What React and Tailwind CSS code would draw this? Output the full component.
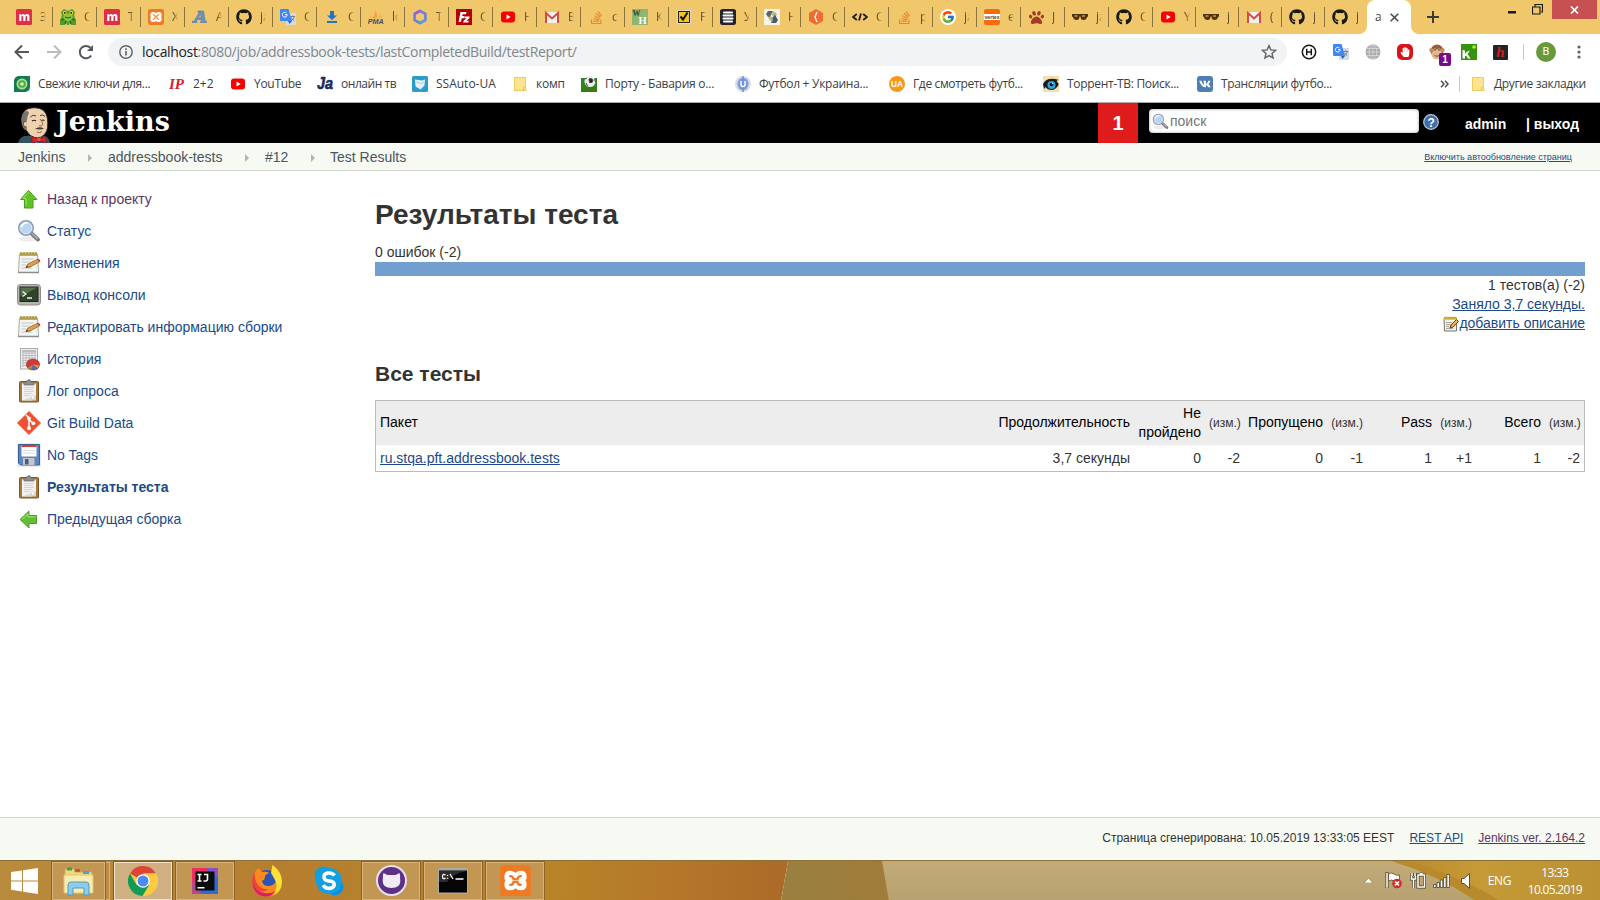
import React from "react";
import { FaGithub, FaStackOverflow, FaPaw, FaVk, FaHandPaper } from "react-icons/fa";
import { FcGoogle } from "react-icons/fc";

const S = ({ s = 16, v = "0 0 16 16", children, className = "" }) => (
  <svg width={s} height={s} viewBox={v} className={"block shrink-0 " + className}>{children}</svg>
);

/* ---------- favicons ---------- */
const Miro = () => (
  <S><rect width="16" height="16" rx="1.500" fill="#dd2f45" /><path d="M3.200 12V5.200h2.200v1c1.200-1.500 3-1.500 3.600 0 1.200-1.600 4.400-1.600 4.400 1.200V12h-2.200V8c0-1.400-1.700-1.200-1.700.2V12H7.200V8c0-1.400-1.800-1.200-1.800.2V12z" fill="#fff" /></S>
);
const Frog = () => (
  <S><path d="M1 3l3-3 4 2 4-2 3 3-1 4 2 4v5h-5l-1-3-1 3H7l-1-3-1 3H0v-5l2-4z" fill="#4f9e2d" /><path d="M4 5h8l1 4-5 4-5-4z" fill="#8bc53f" /><circle cx="4.800" cy="3.800" r="2" fill="#f5d21b" /><circle cx="11.200" cy="3.800" r="2" fill="#f5d21b" /><circle cx="4.800" cy="3.800" r=".9" /><circle cx="11.200" cy="3.800" r=".9" /><path d="M5 8q3 2 6 0M1 11l3-1M15 11l-3-1M5 15l1-3M11 15l-1-3" stroke="#1d5b17" fill="none" /></S>
);
const Xampp = ({ s = 16 }) => (
  <S s={s} v="0 0 32 32">
    <rect width="32" height="32" rx="4" fill="#ef7a26" />
    <path d="M10 7.500q-4 .5-4 4.500 0 3 2 4-2 1-2 4 0 4.500 4.500 4.500Q14 24.500 16 21.500q2 3 5.500 3 4.500 0 4.500-4.500 0-3-2-4 2-1 2-4 0-4.500-4.500-4.500Q18 7.500 16 10.500 14 7.500 10 7.500z" fill="#fff" stroke="#fff" strokeWidth="3" strokeLinejoin="round" />
    <path d="M10.500 11.500q3 0 3.500 3h4q.5-3 3.500-3M10.500 20.500q3 0 3.500-3h4q.5 3 3.500 3" stroke="#ef7a26" strokeWidth="2.400" strokeLinecap="round" fill="none" />
  </S>
);
const LetterA = () => (
  <S><path d="M0 13.500h5v-1.200H4L5 10.500h4.500l.3 1.800H8.500v1.200h6v-1.200h-1.200L11.500 2H6v1.300h1.500L2 12.300H0zM6.200 8.700l2.400-4 .6 4z" fill="#6b93bd" stroke="#4e7ba9" strokeWidth=".6" /></S>
);
const Github = () => <FaGithub size={16} className="shrink-0 text-[#1b1a12]" />;
const GTranslate = () => (
  <S><rect x="6" y="4" width="10" height="12" rx="1" fill="#d5dbe3" /><path d="M1 0h7.500l3.500 12H1a1 1 0 0 1-1-1V1a1 1 0 0 1 1-1z" fill="#4285f4" /><path d="M8 12h4l-2.500 3z" fill="#2f5fc0" /><path d="M7.200 5.700H5M7.200 5.700A2.400 2.400 0 1 1 6.500 4" stroke="#fff" strokeWidth="1" fill="none" /><path d="M10.500 7.500h4.500M12.700 6.500v1M14.300 7.500c-.5 2-1.600 3.300-3 4M11.200 8.500c.6 1.400 1.800 2.500 3 3" stroke="#5a6b80" strokeWidth=".8" fill="none" /></S>
);
const Download = () => (
  <S><path d="M6 2h4v4.500h3L8 11 3 6.500h3z" fill="#2273cc" /><rect x="3" y="12" width="10" height="2" fill="#2273cc" /></S>
);
const Pma = () => (
  <S><path d="M4 9Q7 7 7.500 1 9.500 4 9 9z" fill="#f8a13a" /><path d="M10 9q1.500-2 1-5 3 2 3.500 5z" fill="#f5b35e" /><path d="M1 9h4L3.500 6z" fill="#f4b568" /><text x="-.2" y="15.200" fontSize="6.500" fontWeight="700" fontStyle="italic" fontFamily="Liberation Sans" textLength="16" lengthAdjust="spacingAndGlyphs" fill="#4b4a6d">PMA</text></S>
);
const Hexa = () => (
  <S><path d="M8 1.800l5.400 3.100v6.200L8 14.200 2.600 11.100V4.900z" fill="none" stroke="#6f7ce0" strokeWidth="2.600" strokeLinejoin="round" /><path d="M2.600 4.900L8 1.800" stroke="#a05fc9" strokeWidth="2.600" /><path d="M13.400 11.100L8 14.200" stroke="#54a0e8" strokeWidth="2.600" /></S>
);
const Fz = () => (
  <S><rect width="16" height="16" fill="#b30000" /><path d="M4.500 3h6l-.5 2.200H6.600L6.200 7h2.300L8 9.200H5.700L5 13H2.600z" fill="#fff" /><path d="M8.700 7.500h5l-.4 1.800-3 2.500h2.500L12.400 13.500H7.200l.4-1.700 3-2.500H8.300z" fill="#fff" /></S>
);
const Youtube = () => (
  <S><rect x="1" y="2.500" width="14" height="11" rx="3" fill="#f60000" /><path d="M6.500 5.500v5L10.700 8z" fill="#fff" /></S>
);
const Gmail = () => (
  <S><path d="M1 3h14v11H1z" fill="#f3f1ee" /><path d="M2 14V4l6 5.500L14 4v10" fill="none" stroke="#d54b3d" strokeWidth="2" /></S>
);
const Stack = () => <FaStackOverflow size={15} className="shrink-0 text-[#e9862c]" />;
const WH = () => (
  <S><rect width="16" height="16" fill="#8fb573" /><text x=".5" y="7" fontSize="8" fontWeight="700" fontFamily="Liberation Serif" fill="#2f4a2b">W</text><text x="6.500" y="15" fontSize="10.500" fontWeight="700" fontFamily="Liberation Serif" fill="#fff">H</text></S>
);
const CheckY = () => (
  <S><rect x="1" y="1" width="14" height="14" fill="#dcdcd2" /><rect x="2.500" y="2.500" width="11" height="11" fill="#f7c61b" stroke="#222" /><path d="M4.500 7.500l2.500 3 4.500-7" stroke="#111" strokeWidth="2" fill="none" /></S>
);
const Lines = () => (
  <S><rect width="16" height="16" rx="2.500" fill="#23232a" /><path d="M4 3.500h8M3.500 6.500h9M3.500 9.500h9M4 12.500h8" stroke="#fff" strokeWidth="2" strokeLinecap="round" /></S>
);
const Hib = () => (
  <S><rect width="16" height="16" fill="#f6f4e8" /><path d="M4 2h5l-3 6H4L2 5z" fill="#59666c" /><path d="M9 2l4 3-2 4-3-3z" fill="#bcae79" /><path d="M7 14h5l2-3-3-5-3 3z" fill="#445a70" /><path d="M4 8l4 6 1-4-2-3z" fill="#bcae79" /></S>
);
const Brace = () => (
  <S><path d="M8 0l7 4v8l-7 4-7-4V4z" fill="#ee6c32" /><path d="M9.500 3.500C7 3.500 8.800 7.500 6.500 8 8.800 8.500 7 12.500 9.500 12.500" stroke="#fff" strokeWidth="1.300" fill="none" /></S>
);
const Code = () => (
  <S><path d="M4.800 5L1 8l3.800 3M11.200 5L15 8l-3.800 3M9 4.500l-2 7" stroke="#1b1a12" strokeWidth="1.800" fill="none" /></S>
);
const Google = () => <div className="flex size-4 shrink-0 items-center justify-center rounded-full bg-white"><FcGoogle size={14} /></div>;
const Vertex = () => (
  <S><rect width="16" height="16" rx="2" fill="#f96a0c" /><rect y="5" width="16" height="6" fill="#fff" /><text x=".5" y="9.700" fontSize="5" fontWeight="700" fontFamily="Liberation Sans" textLength="15" lengthAdjust="spacingAndGlyphs" fill="#444">vertex</text></S>
);
const Paw = () => <FaPaw size={15} className="shrink-0 text-[#a33a2c]" />;
const Glasses = () => (
  <S><path d="M0 5h16v2.500l-1 .5q-.5 3-3.500 3T8.500 7.500h-1Q7.500 11 4.500 11T1 8L0 7.500z" fill="#4a3310" /><path d="M2.500 7h3M10 7h3" stroke="#e08e1b" strokeWidth="1.500" /></S>
);

const TABS = [
  [Miro, "З"], [Frog, "С"], [Miro, "Т"], [Xampp, "Х"], [LetterA, "А"], [Github, "ja"], [GTranslate, "С"], [Download, "С"],
  [Pma, "lo"], [Hexa, "Т"], [Fz, "С"], [Youtube, "Н"], [Gmail, "В"], [Stack, "с"], [WH, "К"], [CheckY, "F"],
  [Lines, "У"], [Hib, "Н"], [Brace, "С"], [Code, "С"], [Stack, "р"], [Google, "ja"], [Vertex, "е"], [Paw, "J"],
  [Glasses, "ja"], [Github, "С"], [Youtube, "Y"], [Glasses, "j"], [Gmail, "("], [Github, "j"], [Github, "j"],
];

const Tab = ({ Icon, t, w, last }) => (
  <div className={"flex h-full shrink-0 items-center pl-[7px] " + w}>
    <div className="flex w-4 shrink-0 justify-center"><Icon /></div>
    <div className="ml-2 w-[6px] shrink-0 overflow-hidden text-[12px] leading-4 whitespace-nowrap text-[#5a4c2a] [mask-image:linear-gradient(to_right,#000_30%,transparent)]">{t}</div>
    <div className={"ml-auto h-5 w-px " + (last ? "" : "bg-[#8b7440]")} />
  </div>
);

/* ---------- bookmarks ---------- */
const Leaf = () => (
  <S><path d="M5 0h11v11a5 5 0 0 1-5 5H0V5a5 5 0 0 1 5-5z" fill="#147a4f" /><circle cx="8" cy="8" r="5.500" fill="#a8dc9b" /><circle cx="8" cy="8" r="3.800" fill="#4eae3f" /><circle cx="8" cy="8" r="1.800" fill="#d6f0c8" /></S>
);
const IP = () => (
  <S><text x="0" y="13" fontSize="15" fontWeight="700" fontStyle="italic" fontFamily="Liberation Serif" textLength="15" lengthAdjust="spacingAndGlyphs" fill="#d8202a">IP</text></S>
);
const Ja = () => (
  <S><text x="0" y="13" fontSize="16" fontWeight="700" fontStyle="italic" fontFamily="Liberation Sans" textLength="16" lengthAdjust="spacingAndGlyphs" stroke="#1c2a5e" strokeWidth=".6" fill="#1c2a5e">Ja</text></S>
);
const SSA = () => (
  <S><rect width="16" height="16" rx="1.500" fill="#2c9ccb" /><path d="M3 3.500l7 1 3-1-.5 6-4 4-5-3z" fill="#e2f2f8" /><path d="M4 6l4.500 1.500L12 6" stroke="#a8cfdf" fill="none" /></S>
);
const Folder = () => (
  <S><path d="M2.500 1.500h11v10l.5 1v2H2.500z" fill="#fde48d" stroke="#eccb62" /><path d="M11.500 14.500v-3l2-1" fill="none" stroke="#e5bf4c" /></S>
);
const Ball = () => (
  <S><rect y="2" width="16" height="14" fill="#2f8420" /><rect y="11" width="16" height="5" fill="#3c7a13" /><circle cx="9" cy="5.500" r="5.500" fill="#e9ecec" /><path d="M8 3l2-.5 2 1.500-1 2.500H8.500zM4 3l2-1M13.500 3l1 3M5 7l1.500 3" fill="#222" stroke="#444" /></S>
);
const UBall = () => (
  <S><circle cx="8" cy="8" r="8" fill="#d9dce3" /><ellipse cx="8" cy="8" rx="5.500" ry="6.200" fill="#7d9be0" /><path d="M8 0v16" stroke="#6f8fd8" strokeWidth="1.500" /><path d="M6 5v3.500a2 2 0 0 0 4 0V5" stroke="#fff" strokeWidth="1.400" fill="none" /></S>
);
const UA = () => (
  <S><circle cx="8" cy="8" r="8" fill="#f7981d" /><text x="2" y="11.300" fontSize="9" fontWeight="700" fontFamily="Liberation Sans" textLength="12" lengthAdjust="spacingAndGlyphs" fill="#fff">UA</text></S>
);
const Eye = () => (
  <S><rect width="16" height="16" fill="#f6dfa8" /><path d="M0 8q4-8 16-4-3 0-2 2 2 1 1.500 3-3 5-7 5-4 0-6-3L1 13z" fill="#1b1b1f" /><circle cx="8.500" cy="9" r="4" fill="#2aa5da" /><circle cx="8.500" cy="8.500" r="1.700" /><circle cx="9.500" cy="7.500" r=".7" fill="#fff" /></S>
);
const Vk = () => <div className="flex size-4 shrink-0 items-center justify-center rounded-[3px] bg-[#4d7fb6] text-white"><FaVk size={12} /></div>;

const BOOKMARKS = [
  [Leaf, "Свежие ключи для...", "w-[155px]", "tracking-[-0.32px]"],
  [IP, "2+2", "w-[61px]", ""],
  [Youtube, "YouTube", "w-[87px]", "tracking-[-0.3px]"],
  [Ja, "онлайн тв", "w-[95px]", "tracking-[-0.45px]"],
  [SSA, "SSAuto-UA", "w-[100px]", ""],
  [Folder, "комп", "w-[69px]", "tracking-[-0.2px]"],
  [Ball, "Порту - Бавария о...", "w-[154px]", "tracking-[-0.25px]"],
  [UBall, "Футбол + Украина...", "w-[154px]", "tracking-[-0.28px]"],
  [UA, "Где смотреть футб...", "w-[154px]", "tracking-[-0.37px]"],
  [Eye, "Торрент-ТВ: Поиск...", "w-[154px]", "tracking-[-0.3px]"],
  [Vk, "Трансляции футбо...", "w-[154px]", "tracking-[-0.35px]"],
];

/* ---------- jenkins icons ---------- */
const Up = () => (
  <S s={24} v="0 0 24 24"><path d="M11.500 3.500L20 12.500h-4V21H7.500v-8.500h-4z" fill="#5fc322" stroke="#46a01a" /><path d="M11.500 5l-5.500 6.500h3v7" stroke="#9be56a" fill="none" /></S>
);
const Left = () => (
  <S s={24} v="0 0 24 24"><path d="M3 12.500L12 4v4.500h7.500v8H12V21z" fill="#63bd35" stroke="#4c9e26" /><path d="M5 12.300l6-5.500v3h7.500" stroke="#a6e07e" fill="none" /></S>
);
const Lens = ({ s = 24 }) => (
  <S s={s} v="0 0 24 24"><ellipse cx="11" cy="20" rx="9" ry="2.500" fill="#ececec" /><path d="M14.500 14.500l6.500 6" stroke="#777" strokeWidth="4" strokeLinecap="round" /><path d="M15 14.500l6 5.500" stroke="#b5b5b5" strokeWidth="1.500" /><circle cx="9" cy="9" r="7" fill="#b9d5f3" stroke="#8d9bb0" strokeWidth="2" /><circle cx="9" cy="9" r="6" fill="none" stroke="#e4eef9" /><path d="M4.500 8q1-4 6-4" stroke="#fff" strokeWidth="1.500" fill="none" /></S>
);
const Notepad = () => (
  <S s={24} v="0 0 24 24"><path d="M2.500 3h18l1 18.500H1.500z" fill="#f4f4f2" stroke="#a9a9a6" /><path d="M1 21.500h21" stroke="#8f8f8c" strokeWidth="1.500" /><rect x="3" y="1.500" width="17" height="3.500" fill="#c3ad53" /><path d="M4 1v3M7 1v3M10 1v3M13 1v3M16 1v3M19 1v3" stroke="#8a7a35" strokeWidth=".8" /><path d="M4.500 8h12M4.500 11h9M4.500 14h6M4.500 17h10" stroke="#c4c4c4" /><path d="M9 16.500l2-3.500 10-5 2 2.500-10 5.500z" fill="#e0a04a" stroke="#8d5f26" strokeWidth=".8" /><path d="M20 8.500l1.500-.8L23.500 9.500 22 11z" fill="#c9403a" /><path d="M8.500 17l1.500-2 1.500 1z" fill="#333" /></S>
);
const SmallNote = () => (
  <S s={16}><path d="M1 2.500h12.500v12.500H1.500z" fill="#f1efe6" stroke="#77756a" /><rect x="1" y="1" width="13" height="3" fill="#e5c83e" /><path d="M2 .7v2M4 .7v2M6 .7v2M8 .7v2M10 .7v2M12 .7v2" stroke="#8a7524" strokeWidth=".8" /><path d="M3 6.500h6M3 8.500h5M3 10.500h3M3 12.500h7" stroke="#a5a399" strokeWidth=".9" /><path d="M7 12l1-3 5.500-5.500L15.500 5.500 10 11z" fill="#f0b541" stroke="#3f3420" strokeWidth=".9" /></S>
);
const Term = () => (
  <S s={24} v="0 0 24 24"><rect x=".5" y="1.500" width="23" height="20.500" rx="3" fill="#b5b6b2" stroke="#8d8e8a" /><rect x="3" y="4" width="18" height="14.500" fill="#2f4428" stroke="#1d2719" /><path d="M3.500 4.500h17l-17 9z" fill="#57704c" /><path d="M5.500 8.500l3.500 2.500-3.500 2.500M10 15h5" stroke="#eef3ea" strokeWidth="1.300" fill="none" /></S>
);
const Graph = () => (
  <S s={24} v="0 0 24 24"><rect x="3.500" y="1.500" width="17" height="20.500" fill="#eee" stroke="#aaa" /><path d="M5 3.500h14M5 6h14M5 8.500h14M5 11h14M5 13.500h8M5 16h4M5 18.500h4M6 3v17M9 3v17M12 3v10M15 3v8M18 3v8" stroke="#b4b4b4" strokeWidth=".8" /><rect x="5" y="3" width="14" height="2" fill="#bbb" /><ellipse cx="16" cy="17.500" rx="6.500" ry="5.500" fill="#d5383a" stroke="#9f2326" strokeWidth=".7" /><path d="M16 17.500l4.500 3.500q-3 2.500-6.500 1.500z" fill="#4c71b5" /><path d="M16 17.500l-2 5.200-3-2z" fill="#88a33a" /><path d="M16 17.500l6 1q-.5 1.500-1.500 2.500z" fill="#e0a232" /></S>
);
const Clip = () => (
  <S s={24} v="0 0 24 24"><rect x="2.500" y="2.500" width="19" height="20.500" rx="1" fill="#a8783a" stroke="#7e5725" /><path d="M5 4.500h14V17l-4.500 4.500H5z" fill="#f1f1ef" /><path d="M5 21.500h14V17" fill="#d6d6d2" /><path d="M14.500 21.500V17H19z" fill="#fff" stroke="#bbb" strokeWidth=".5" /><path d="M7 8.500h10M7 10.500h9M7 12.500h10M7 14.500h8M7 16.500h6" stroke="#cfcfcf" strokeWidth=".9" /><path d="M7 3h3q0-2.500 2-2.500T14 3h3v3H7z" fill="#8b8f8b" stroke="#666a66" strokeWidth=".7" /></S>
);
const Git = () => (
  <S s={24} v="0 0 24 24"><path d="M12 .5L23.500 12 12 23.500.5 12z" fill="#f05133" stroke="#f05133" strokeLinejoin="round" /><path d="M8.800 3.700L12 7v10M12 8.500l4.200 4" stroke="#fff" strokeWidth="1.500" fill="none" /><circle cx="12" cy="7.500" r="1.900" fill="#fff" /><circle cx="12" cy="17.200" r="1.900" fill="#fff" /><circle cx="16.300" cy="12.300" r="1.900" fill="#fff" /></S>
);
const Floppy = () => (
  <S s={24} v="0 0 24 24"><rect width="24" height="24" fill="#e9ebf0" /><path d="M1.500 1.500h21v20.500h-19l-2-2z" fill="#5b86be" stroke="#3c5f92" /><rect x="4.500" y="2" width="15" height="11.500" fill="#fff" /><rect x="4.500" y="2" width="15" height="2" fill="#dc3a2e" /><path d="M6 7.500h12M6 10h12" stroke="#d8d8d8" /><rect x="6" y="15" width="11.500" height="7" fill="#c3c7cb" /><rect x="8" y="16" width="3.500" height="5.500" fill="#4a5d78" /></S>
);
const MENU = [
  [Up, "Назад к проекту", "text-[#5c3566]"], [Lens, "Статус", "text-[#204a87]"], [Notepad, "Изменения", "text-[#204a87]"], [Term, "Вывод консоли", "text-[#204a87]"],
  [Notepad, "Редактировать информацию сборки", "text-[#204a87]"], [Graph, "История", "text-[#204a87]"], [Clip, "Лог опроса", "text-[#204a87]"], [Git, "Git Build Data", "text-[#204a87]"],
  [Floppy, "No Tags", "text-[#204a87]"], [Clip, "Результаты теста", "font-bold text-[#204a87]"], [Left, "Предыдущая сборка", "text-[#204a87]"],
];

const Butler = () => (
  <svg width="32" height="36" viewBox="0 0 32 36" className="block shrink-0">
    <path d="M0 36q1-5 6-7l18-1q7 1 8 8z" fill="#35505f" />
    <path d="M11 25l7 11 7-8z" fill="#f4f4f2" />
    <path d="M4 13Q3 1 16 .7 28 .5 29.500 12q1 10-2 14-4 6-11 4.500-5-1-8-7-5-1-4.500-10.500z" fill="#efd3b0" stroke="#2a211b" strokeWidth=".9" />
    <path d="M3.500 15Q2 9 7 4.500 10 3 11 6q-2 3-2 7l-1 3 1 7q-5-1-5.500-8z" fill="#77736e" />
    <path d="M8 15q-3-1-2.500 2.500.5 3 3 2.500" fill="#efd3b0" stroke="#54402f" strokeWidth=".8" />
    <path d="M12.500 10q2.500-3 5.500-1M22 8.500q3-1.500 5 1" stroke="#4d392a" strokeWidth="1" fill="none" />
    <path d="M14 14q2-1.500 4 0M23.500 13.500q1.500-1 3 0" stroke="#33241a" strokeWidth="1.200" fill="none" />
    <path d="M22 12q4 5 2 6.500-2 1-3 0" stroke="#7f5e47" strokeWidth=".9" fill="none" />
    <path d="M17 22q4-3 9-.5-3 1.500-9 .5z" fill="#4c3a2c" />
    <path d="M19 25q3 1.500 5-.5" stroke="#7f5e47" strokeWidth=".9" fill="none" />
    <path d="M14 29.500l7 2.500 7-2.500v6.500l-7-2-7 2z" fill="#d8242c" stroke="#7d1218" strokeWidth=".7" />
    <circle cx="21" cy="32.500" r="1.800" fill="#ef4a4f" />
  </svg>
);

const HEAD = "px-1 text-right";
const UPHEAD = "px-1 pb-[2px] text-right";
const DELTA = "px-1 text-right text-[12px] text-[#333]";
const Crumb = () => <svg width="4" height="8" viewBox="0 0 4 8" className="block"><path d="M0 0l4 4-4 4z" fill="#b4b4b4" /></svg>;

/* ---------- taskbar ---------- */
const TB = ({ children, w, active, plain }) => (
  <div className={"flex h-[38px] shrink-0 items-center justify-center " + w + " " + (plain ? "" : active ? "border border-[#f0e2c8] bg-[#cfb083] outline outline-1 outline-[#7d5b25]" : "border border-[#d8b47c] bg-[#c19753] outline outline-1 outline-[#8a6428]")}>{children}</div>
);

export default function App() {
  return (
    <div className="flex h-[900px] w-[1600px] flex-col overflow-hidden bg-white font-['Liberation_Sans',Arial,sans-serif] text-[14px] text-[#333]">
      {/* tab strip */}
      <div className="flex h-[34px] shrink-0 bg-[#f0c76b] pl-[9px] font-['Open_Sans',sans-serif]">
        {TABS.map(([I, t], i) => <Tab key={i} Icon={I} t={t} w={i === 30 ? "w-[42px]" : i > 25 ? "w-[43px]" : "w-11"} last={i === 30} />)}
        <div className="relative flex h-[34px] w-[44px] shrink-0 items-center rounded-t-[8px] bg-white pl-2">
          <svg className="absolute bottom-0 -left-2" width="8" height="8"><path d="M8 0v8H0a8 8 0 0 0 8-8z" fill="#fff" /></svg>
          <svg className="absolute -right-2 bottom-0" width="8" height="8"><path d="M0 0v8h8a8 8 0 0 1-8-8z" fill="#fff" /></svg>
          <div className="w-2 overflow-hidden text-[12px] [mask-image:linear-gradient(to_right,#000_60%,transparent)]">ad</div>
          <svg className="ml-[7px]" width="9" height="9" viewBox="0 0 9 9"><path d="M.7.7l7.600 7.600M8.300.7L.7 8.300" stroke="#4a4d51" strokeWidth="1.600" /></svg>
        </div>
        <svg className="mt-[11px] ml-[16px] block" width="12" height="12" viewBox="0 0 12 12"><path d="M6 0v12M0 6h12" stroke="#3c3a35" strokeWidth="2" /></svg>
        <svg className="mt-[10px] ml-[69px] block" width="9" height="4"><rect y="1" width="8" height="2.500" fill="#1c1a14" /></svg>
        <svg className="mt-[4px] ml-[15px] block" width="11" height="11"><path d="M.5 3h7.500v7H.5zM3 2.500V.5h7.500V8H9" fill="none" stroke="#1c1a14" strokeWidth="1.200" /></svg>
        <div className="ml-[9px] flex h-[19px] w-[45px] items-center justify-center bg-[#c75050]">
          <svg width="9" height="8" viewBox="0 0 9 8"><path d="M1 .5l7 7M8 .5l-7 7" stroke="#fff" strokeWidth="1.700" /></svg>
        </div>
      </div>

      {/* toolbar */}
      <div className="flex h-9 shrink-0 items-center pl-[14px] text-[#5f6368]">
        <svg width="16" height="16" viewBox="0 0 16 16"><path d="M15 8H2M8 1.500L1.500 8 8 14.500" stroke="#54585c" strokeWidth="2" fill="none" /></svg>
        <svg className="ml-4" width="16" height="16" viewBox="0 0 16 16"><path d="M1 8h13M8 1.500L14.500 8 8 14.500" stroke="#b9bcbf" strokeWidth="2" fill="none" /></svg>
        <svg className="ml-4" width="16" height="16" viewBox="0 0 16 16"><path d="M13.200 11.500A6.200 6.200 0 1 1 12.500 3.800" stroke="#54585c" strokeWidth="2" fill="none" /><path d="M15 1v6H9z" fill="#54585c" /></svg>
        <div className="ml-[14px] flex h-7 w-[1179px] items-center rounded-full bg-[#f1f3f4] pr-[10px] pl-[11px]">
          <svg width="14" height="14" viewBox="0 0 14 14"><circle cx="7" cy="7" r="6.200" fill="none" stroke="#5f6368" strokeWidth="1.400" /><path d="M7 6v4.500M7 3.300v1.600" stroke="#5f6368" strokeWidth="1.600" /></svg>
          <div className="ml-[9px] font-['Open_Sans',sans-serif] text-[14px] leading-5 tracking-[-0.34px] text-[#80868b]"><span className="text-[#202124]">localhost</span>:8080/job/addressbook-tests/lastCompletedBuild/testReport/</div>
          <svg className="ml-auto" width="16" height="16" viewBox="0 0 16 16"><path d="M8 1.600l1.900 4.300 4.700.4-3.600 3.100 1.100 4.600L8 11.600 3.900 14 5 9.400 1.400 6.300l4.700-.4z" fill="none" stroke="#5f6368" strokeWidth="1.400" /></svg>
        </div>
        <S s={16} className="ml-[14px]"><circle cx="8" cy="8" r="6.700" fill="none" stroke="#15171a" strokeWidth="1.500" /><path d="M5.700 4.800v6.400M10.300 4.800v6.400M5.700 8h4.600" stroke="#15171a" strokeWidth="1.500" /></S>
        <div className="ml-4"><GTranslate /></div>
        <S s={16} className="ml-4"><circle cx="8" cy="8" r="7.500" fill="#a9a9a9" /><path d="M.5 8h15M2 4.500h12M2 11.500h12M8 .5v15" stroke="#dcdcdc" strokeWidth=".8" /><ellipse cx="8" cy="8" rx="3.800" ry="7.500" fill="none" stroke="#dcdcdc" strokeWidth=".8" /></S>
        <div className="ml-4 flex size-4 items-center justify-center rounded-[5px] bg-[#d9131a] text-white"><FaHandPaper size={10} /></div>
        <div className="relative ml-4">
          <S><circle cx="8" cy="7" r="6.500" fill="#9a5a33" /><circle cx="2.200" cy="6" r="2" fill="#c88a62" /><circle cx="13.800" cy="6" r="2" fill="#c88a62" /><ellipse cx="8" cy="10.500" rx="5.500" ry="4.800" fill="#e2b492" /><circle cx="6" cy="6" r="1.600" fill="#f3dcc8" /><circle cx="10" cy="6" r="1.600" fill="#f3dcc8" /><circle cx="6" cy="6" r=".8" /><circle cx="10" cy="6" r=".8" /><path d="M5.500 11.500q2.500 1.500 5 0" stroke="#8a4a2a" fill="none" /></S>
          <div className="absolute top-[9px] left-[10px] flex h-[13px] w-3 items-center justify-center rounded-[2px] bg-[#7b0a86] text-[10px] font-bold text-white">1</div>
        </div>
        <S className="ml-4"><rect width="16" height="16" fill="#36930f" /><path d="M1.500 6l2.500.5v3.500l1.500-2L9 6.500 6.500 10l3 4.500H7l-2-3-1 1v2H1.500z" fill="#fff" /><circle cx="13" cy="3" r="1.800" fill="#a8f03a" /></S>
        <div className="ml-4 flex size-[15px] items-center justify-center rounded-[1px] bg-[#232323] font-['Liberation_Serif',serif] text-[15px] leading-none font-bold text-[#cf2228] italic">h</div>
        <div className="ml-[15px] h-4 w-px bg-[#c6c8cb]" />
        <div className="ml-[12px] flex size-5 items-center justify-center rounded-full bg-[#68993a] font-[Roboto,sans-serif] text-[11px] text-white">B</div>
        <svg className="ml-[21px]" width="4" height="14" viewBox="0 0 4 14"><circle cx="2" cy="2" r="1.600" fill="#5f6368" /><circle cx="2" cy="7" r="1.600" fill="#5f6368" /><circle cx="2" cy="12" r="1.600" fill="#5f6368" /></svg>
      </div>

      {/* bookmarks */}
      <div className="flex h-[33px] shrink-0 items-center border-b border-[#a9a9a9] pb-[4px] pl-[14px] font-['Open_Sans',sans-serif] text-[12px] leading-4 text-[#3c4043]">
        {BOOKMARKS.map(([I, t, w, c]) => (
          <div key={t} className={"flex shrink-0 items-center gap-2 whitespace-nowrap " + w}><I /><span className={c}>{t}</span></div>
        ))}
        <svg className="ml-[89px]" width="9" height="8" viewBox="0 0 9 8"><path d="M1 .7L4 4 1 7.300M5 .7L8 4 5 7.300" stroke="#4a4d51" strokeWidth="1.500" fill="none" /></svg>
        <div className="ml-[10px] h-4 w-px bg-[#c9cbce]" />
        <div className="ml-[10px] flex items-center gap-2 whitespace-nowrap"><Folder /><span className="tracking-[-0.35px]">Другие закладки</span></div>
      </div>

      {/* header */}
      <div className="flex h-10 shrink-0 bg-black pl-[18px]">
        <div className="flex w-[38px] items-end"><Butler /></div>
        <div className="font-['DejaVu_Serif',serif] text-[27px] leading-[38px] font-bold tracking-[0.1px] text-white">Jenkins</div>
        <div className="ml-auto flex h-10 w-10 items-center justify-center bg-[#e01b1b] text-[20px] font-bold text-white">1</div>
        <div className="mt-[6px] ml-[11px] flex h-6 w-[270px] items-center rounded-[4px] bg-white pl-[3px] shadow-[inset_0_0_3px_#999]">
          <Lens s={17} /><span className="ml-px text-[14px] text-[#757575]">поиск</span>
        </div>
        <S s={16} className="mt-[11px] ml-[4px]"><circle cx="8" cy="8" r="7.300" fill="#3f6ea8" stroke="#b9cbe2" strokeWidth="1.200" /><text x="4.500" y="12.500" fontSize="12" fontWeight="700" fontFamily="Liberation Sans" fill="#fff">?</text></S>
        <div className="ml-[26px] w-[61px] pt-[2px] text-[14px] leading-[38px] font-bold text-white">admin</div>
        <div className="w-[74px] pt-[2px] text-[14px] leading-[38px] font-bold whitespace-nowrap text-white">| выход</div>
      </div>

      {/* breadcrumbs */}
      <div className="flex h-7 shrink-0 items-center border-b border-[#d3d7cf] bg-[#f6faf2] pt-[2px] pl-[18px] text-[#4d545d]">
        <span className="w-[70px]">Jenkins</span><Crumb />
        <span className="ml-[16px] w-[137px]">addressbook-tests</span><Crumb />
        <span className="ml-[16px] w-[46px]">#12</span><Crumb />
        <span className="ml-[15px]">Test Results</span>
        <a className="mr-[28px] ml-auto text-[9px] text-[#204a87] underline">Включить автообновление страниц</a>
      </div>

      {/* page body */}
      <div className="flex h-[646px] shrink-0">
        <div className="flex w-[375px] shrink-0 flex-col pt-3 pl-[17px]">
          {MENU.map(([I, t, c], i) => (
            <div key={i} className={"flex h-8 items-center gap-[6px] leading-4 " + c}><I /><span className="pb-px">{t}</span></div>
          ))}
        </div>
        <div className="flex w-[1210px] flex-col">
          <h1 className="mt-[28px] h-8 text-[28px] leading-8 font-bold">Результаты теста</h1>
          <div className="mt-[12px] h-[19px] leading-[18px]">0 ошибок (-2)</div>
          <div className="h-[14px] bg-[#729fcf]" />
          <div className="flex flex-col items-end leading-[19px]">
            <div>1 тестов(а) (-2)</div>
            <a className="text-[#204a87] underline">Заняло 3,7 секунды.</a>
            <div className="flex items-center text-[#204a87]"><SmallNote /><a className="underline">добавить описание</a></div>
          </div>
          <h2 className="mt-[28px] h-[26px] text-[21px] leading-[26px] font-bold">Все тесты</h2>
          <div className="mt-[13px] border border-[#bbb]">
            <div className="grid h-[45px] grid-cols-[1fr_142px_71px_39px_83px_40px_69px_40px_69px_39px] items-center border-b border-[#f7f7f7] bg-[#ededed] leading-[19px] text-black">
              <div className="px-1 pb-[2px]">Пакет</div>
              <div className={UPHEAD}>Продолжительность</div>
              <div className={HEAD}>Не пройдено</div>
              <div className={DELTA}>(изм.)</div>
              <div className={UPHEAD}>Пропущено</div>
              <div className={DELTA}>(изм.)</div>
              <div className={UPHEAD}>Pass</div>
              <div className={DELTA}>(изм.)</div>
              <div className={UPHEAD}>Всего</div>
              <div className={DELTA}>(изм.)</div>
            </div>
            <div className="grid h-[25px] grid-cols-[1fr_142px_71px_39px_83px_40px_69px_40px_69px_39px] items-center leading-[19px]">
              <a className="px-1 text-[#204a87] underline">ru.stqa.pft.addressbook.tests</a>
              {["3,7 секунды", "0", "-2", "0", "-1", "1", "+1", "1", "-2"].map((t, i) => <div key={i} className={HEAD}>{t}</div>)}
            </div>
          </div>
        </div>
      </div>

      {/* footer */}
      <div className="flex h-[43px] shrink-0 items-center justify-end gap-[15px] border-t border-[#d3d7cf] bg-[#f6faf2] pr-[15px] pb-[2px] text-[12px]">
        <span>Страница сгенерирована: 10.05.2019 13:33:05 EEST</span>
        <a className="text-[#204a87] underline">REST API</a>
        <a className="text-[#5c3566] underline">Jenkins ver. 2.164.2</a>
      </div>

      {/* taskbar */}
      <div className="relative h-10 shrink-0 overflow-hidden border-t border-[#8f6f38]">
        <svg className="absolute inset-0" width="1600" height="40" preserveAspectRatio="none">
          <defs>
            <linearGradient id="a"><stop offset="0" stopColor="#b98b3c" /><stop offset=".35" stopColor="#b57f30" /><stop offset=".7" stopColor="#b88428" /><stop offset=".85" stopColor="#b5772a" /><stop offset="1" stopColor="#ab6a28" /></linearGradient>
            <linearGradient id="b"><stop offset="0" stopColor="#99803f" /><stop offset="1" stopColor="#a17c3a" /></linearGradient>
            <linearGradient id="c" x2="0" y2="1"><stop offset="0" stopColor="#c2aa79" /><stop offset="1" stopColor="#b8a170" /></linearGradient>
            <linearGradient id="d"><stop offset="0" stopColor="#b98727" /><stop offset=".4" stopColor="#c59a36" /><stop offset="1" stopColor="#bb9135" /></linearGradient>
          </defs>
          <path d="M0 0h788l-7 40H0z" fill="url(#a)" />
          <path d="M788 0h95l7 40H781z" fill="url(#b)" />
          <path d="M882 0h720v40H889z" fill="url(#c)" />
          <path d="M1392 0h208v40h-120q-38-24-88-40z" fill="url(#d)" />
          <path d="M1392 0h18q56 18 90 40h-24q-38-26-84-40z" fill="#b98a2c" />
        </svg>
        <div className="relative flex h-full items-center">
          <svg className="ml-[11px] block" width="27" height="26" viewBox="0 0 27 26"><path d="M0 4l11-1.600v10H0zM12 2.200L27 0v12.400H12zM0 13.400h11v10L0 21.800zM12 13.400h15V26l-15-2.200z" fill="#fff" /></svg>
          <div className="ml-[14px]">
            <TB w="w-[53px]">
              <svg width="32" height="30" viewBox="0 0 32 30"><path d="M2 3h9l1 3h17v21H2z" fill="#efd883" stroke="#c9aa50" /><path d="M4 1.500h5v3H4z" fill="#3ba447" /><path d="M12 3h5v3h-5z" fill="#d2503c" /><path d="M20 5h6v3h-6z" fill="#4aa0d8" /><path d="M1 9h29v18H1z" fill="#f8ecb1" stroke="#dcc678" /><path d="M5 29V19q0-3 3-3h15q3 0 3 3v10h-5v-7H10v7z" fill="#8fcbe9" stroke="#4c9dc6" /></svg>
            </TB>
          </div>
          <div className="ml-px h-[38px] w-[4px] border-y border-r border-[#d8b47c] bg-[#b98c48]" />
          <div className="ml-[4px]">
            <TB w="w-[58px]" active>
              <svg width="30" height="30" viewBox="0 0 30 30"><circle cx="15" cy="15" r="15" fill="#fccb3f" /><path d="M15 15L2 7.500A15 15 0 0 1 28 7.500H15z" fill="#db4437" /><path d="M2 7.500A15 15 0 0 0 15 30l6.500-11.300L8.500 18.700z" fill="#129a56" /><path d="M28 7.500A15 15 0 0 1 14.500 30L21.500 18.700 20 9 15 7.500z" fill="#fccb3f" /><circle cx="15" cy="15" r="6.800" fill="#fff" /><circle cx="15" cy="15" r="5.500" fill="#4c8bf5" /></svg>
            </TB>
          </div>
          <div className="ml-[4px]">
            <TB w="w-[58px]">
              <svg width="26" height="26" viewBox="0 0 26 26"><path d="M0 0h26v26H0z" fill="#2f6ad6" /><path d="M0 0h17L0 26z" fill="#e9305f" /><path d="M26 0v10L14 0z" fill="#8c52c4" /><path d="M0 26V12l10 14z" fill="#b44a8f" /><rect x="3.500" y="3.500" width="19" height="19" fill="#0b0b0b" /><path d="M5.500 6.500h4M7.500 6.500v6.500M5.500 13h4M12 6.500h3.500v4.500q0 2-2 2h-2M5.500 19.700h7" stroke="#fff" strokeWidth="1.600" fill="none" /></svg>
            </TB>
          </div>
          <div className="ml-[3px]">
            <TB w="w-[59px]" plain>
              <svg width="30" height="32" viewBox="0 0 30 32">
                <circle cx="15" cy="17" r="12" fill="#2b55b4" />
                <path d="M3 7q2-3 4-4 1 3 4 4 4-1 6 1-5 2-4 5-1 2-3 3 1 5 6 5 6 0 8-5 2-5-3-10l-1-6q10 6 10 17 0 14-15 14.500Q0 31 .5 17q0-6 2.500-10z" fill="#fb8a1e" />
                <path d="M19 8l1.500-8q9.500 7 9.500 17-.5 10-9 13 6-8 2-15-2-4-4-7z" fill="#fde03a" />
                <path d="M.6 14q1 12 12 14 6 1 11-2-4 6-11 5.500Q-1 29.500.6 14z" fill="#d81f68" />
                <path d="M3 7q-1 9 4 14 4 4 10 3-6 4-11 1-6-5-5.500-12Q1 10 3 7z" fill="#f1423a" />
              </svg>
            </TB>
          </div>
          <div className="ml-[3px]">
            <TB w="w-[59px]" plain>
              <svg width="30" height="30" viewBox="0 0 30 30"><circle cx="9.500" cy="9.500" r="9" fill="#0e9fdf" /><circle cx="20.500" cy="20.500" r="9" fill="#0e8fdc" /><circle cx="15" cy="15" r="13" fill="#12a0e3" /><path d="M20.500 9.500Q18.500 7 15 7q-5 0-5 3.800t5.200 4.200 5 3.700-5.200 3.800q-4 0-5.800-3.300" stroke="#fff" strokeWidth="3.600" fill="none" /></svg>
            </TB>
          </div>
          <div className="ml-[4px]">
            <TB w="w-[58px]">
              <div className="flex size-[31px] items-center justify-center rounded-full border-2 border-[#e8e0ef] bg-[#5f3186] text-[#efecf2]"><svg width="19" height="16" viewBox="0 0 19 16"><path d="M1.500 0l4 2h8l4-2q1 3 .5 5 2 10-8.500 10T1 5q-.4-2 .5-5z" fill="currentColor" /></svg></div>
            </TB>
          </div>
          <div className="ml-[4px]">
            <TB w="w-[58px]">
              <svg width="30" height="26" viewBox="0 0 30 26"><rect width="30" height="26" rx="1" fill="#a9a9a9" /><rect x="1" y="2.500" width="28" height="22" fill="#050505" /><path d="M1 3h28q-14 2-20 11H1z" fill="#2c2c2c" /><path d="M7.500 6.800q-3-1.500-3 1.700t3 1.700M9.500 7v1M9.500 9.800v1M12 6l3 5M17.500 11h8" stroke="#fff" strokeWidth="1.300" fill="none" /></svg>
            </TB>
          </div>
          <div className="ml-[4px]">
            <TB w="w-[58px]"><Xampp s={31} /></TB>
          </div>
          <div className="ml-auto flex items-center text-white">
            <svg width="9" height="5" viewBox="0 0 9 5"><path d="M4.500 0L9 5H0z" fill="#fff" stroke="#6b5a35" strokeWidth=".5" /></svg>
            <svg className="ml-[12px]" width="17" height="17" viewBox="0 0 17 17"><path d="M2 0v16" stroke="#4d4027" strokeWidth="3" /><path d="M2 .8v15" stroke="#fff" strokeWidth="1.500" /><path d="M3.500 2q3-2 5.500 0t5.500 1v7q-3 1-5.500-1T3.500 9z" fill="#fff" stroke="#5a4a2b" strokeWidth=".8" /><circle cx="12" cy="11.500" r="4.800" fill="#cf2f29" /><path d="M10 9.500l4 4M14 9.500l-4 4" stroke="#fff" strokeWidth="1.600" /></svg>
            <svg className="ml-[8px]" width="16" height="17" viewBox="0 0 16 17"><path d="M8 3h6.500v12H8zM10 1.500h2.500M1.500 4v3h4V4M2 1v3M5 1v3M3.500 7v9" fill="none" stroke="#4d4027" strokeWidth="3" /><path d="M8 3h6.500v12H8zM10 1.500h2.500M1.500 4v3h4V4M2 1v3M5 1v3M3.500 7v9" fill="none" stroke="#fff" strokeWidth="1.500" /></svg>
            <svg className="ml-[7px]" width="17" height="14" viewBox="0 0 17 14"><g fill="#fff" stroke="#4d4027" strokeWidth=".8"><path d="M.5 10.500h2.500v3H.5zM4 8.500h2.500v5H4zM7.300 6h2.500v7.500H7.300zM10.600 3.500h2.500v10h-2.500zM13.900.5h2.500v13h-2.500z" /></g></svg>
            <svg className="ml-[11px]" width="9" height="16" viewBox="0 0 9 16"><path d="M.5 5.500h2.500L8.500.7v14.600L3 10.500H.5z" fill="#fff" stroke="#4d4027" strokeWidth=".9" /></svg>
            <div className="ml-[18px] w-[24px] font-['Open_Sans',sans-serif] text-[12px] leading-4 tracking-[-0.4px]">ENG</div>
            <div className="mr-[18px] ml-[16px] text-center font-['Open_Sans',sans-serif] text-[12px] leading-[17px] tracking-[-0.7px]"><div>13:33</div><div>10.05.2019</div></div>
          </div>
        </div>
      </div>
    </div>
  );
}
